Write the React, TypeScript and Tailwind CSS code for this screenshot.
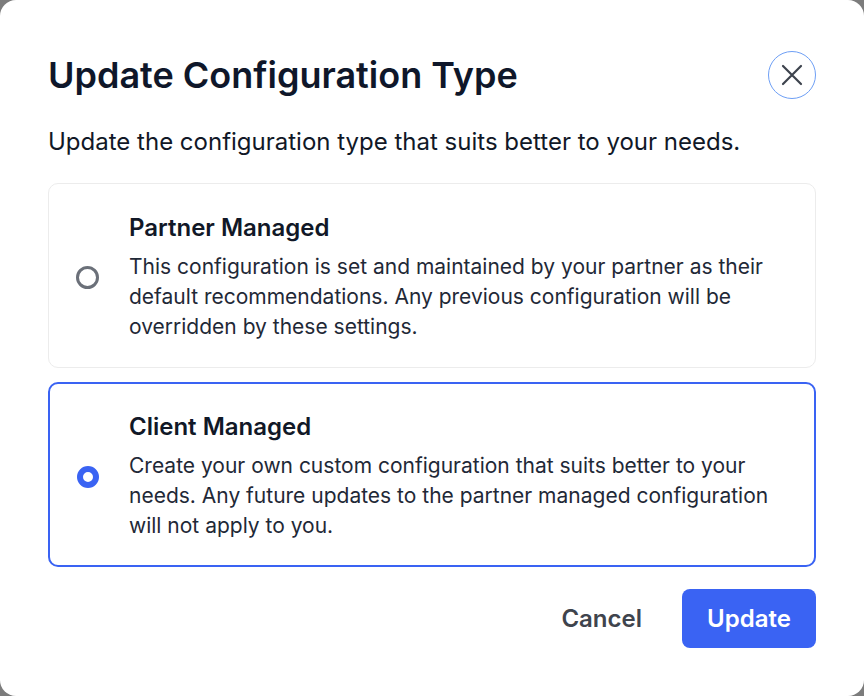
import React from "react";

function Radio({ checked }: { checked: boolean }) {
  return checked ? (
    <span className="block w-[22px] h-[22px] rounded-full border-[6px] border-[#3a63f3] bg-white shrink-0" />
  ) : (
    <span className="block w-[23px] h-[23px] rounded-full border-[3px] border-[#6b7079] bg-white shrink-0" />
  );
}

function Option({
  title,
  desc,
  checked,
}: {
  title: string;
  desc: string;
  checked: boolean;
}) {
  return (
    <div
      className={
        checked
          ? "flex items-center rounded-[10px] border-2 border-[#3a63f3] pl-[27px] pr-[26px] pt-[28px] pb-[24px]"
          : "flex items-center rounded-[10px] border border-[#ececec] pl-[27px] pr-[27px] pt-[29px] pb-[25px]"
      }
    >
      <Radio checked={checked} />
      <div className="ml-[30px] flex flex-col">
        <div className="text-[24px] leading-[30px] font-semibold text-[#111827]">{title}</div>
        <div className="mt-[9px] text-[21px] leading-[30px] text-[#1f2937]">{desc}</div>
      </div>
    </div>
  );
}

export default function App() {
  return (
    <div className="h-[696px] w-[864px] bg-[#7c7c7c]" style={{ fontFamily: "Inter, 'Noto Sans', sans-serif" }}>
      <div className="h-full w-full rounded-[16px] bg-white px-[48px] pt-[51px]">
        <div className="flex items-center justify-between">
          <h1 className="text-[36px] leading-[48px] font-semibold text-[#0f172a]">
            Update Configuration Type
          </h1>
          <button className="flex h-[48px] w-[48px] items-center justify-center rounded-full border border-[#6e9ff5] bg-white">
            <svg width="24" height="24" viewBox="0 0 24 24" fill="none" stroke="#3d434d" strokeWidth="2.2" strokeLinecap="round">
              <path d="M3 3L21 21M21 3L3 21" />
            </svg>
          </button>
        </div>
        <p className="mt-[25px] text-[24px] leading-[36px] text-[#111827]">
          Update the configuration type that suits better to your needs.
        </p>
        <div className="mt-[23px] flex flex-col gap-[14px]">
          <Option
            checked={false}
            title="Partner Managed"
            desc="This configuration is set and maintained by your partner as their default recommendations. Any previous configuration will be overridden by these settings."
          />
          <Option
            checked={true}
            title="Client Managed"
            desc="Create your own custom configuration that suits better to your needs. Any future updates to the partner managed configuration will not apply to you."
          />
        </div>
        <div className="mt-[22px] flex items-center justify-end gap-[16px]">
          <button className="h-[59px] px-[24px] text-[24px] font-semibold text-[#3f444d]">Cancel</button>
          <button className="h-[59px] w-[134px] rounded-[8px] bg-[#3a63f3] text-[24px] font-semibold text-white">
            Update
          </button>
        </div>
      </div>
    </div>
  );
}
